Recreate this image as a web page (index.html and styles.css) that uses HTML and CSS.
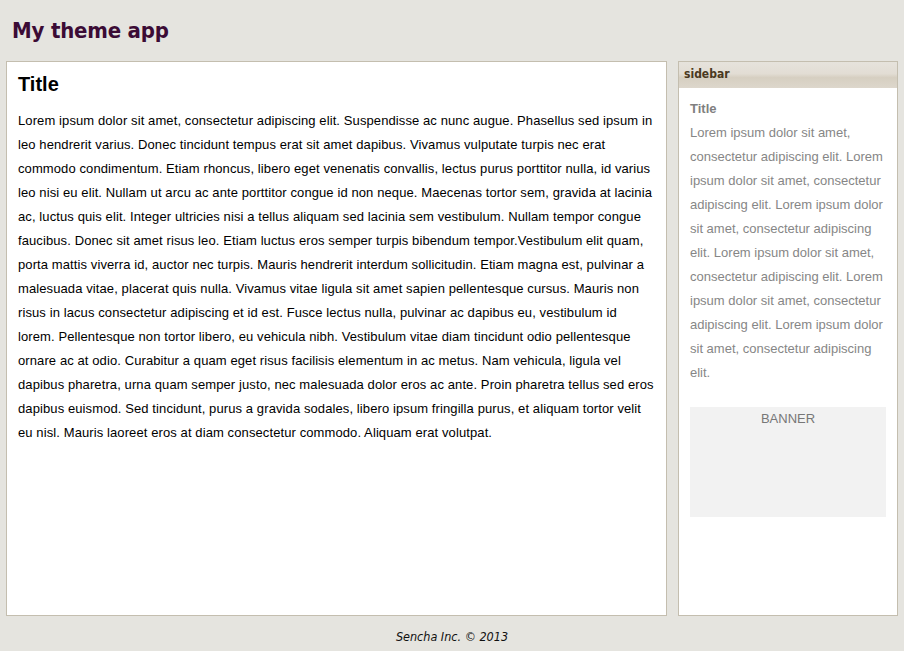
FILE: index.html
```html
<!DOCTYPE html>
<html>
<head>
<meta charset="utf-8">
<title>My theme app</title>
<link rel="stylesheet" href="styles.css">
</head>
<body>
<header class="app-header"><h1 class="app-title">My theme app</h1></header>
<div class="main-row">
  <section class="content-panel">
    <h2 class="content-title">Title</h2>
    <p class="content-text">Lorem ipsum dolor sit amet, consectetur adipiscing elit. Suspendisse ac nunc augue. Phasellus sed ipsum in leo hendrerit varius. Donec tincidunt tempus erat sit amet dapibus. Vivamus vulputate turpis nec erat commodo condimentum. Etiam rhoncus, libero eget venenatis convallis, lectus purus porttitor nulla, id varius leo nisi eu elit. Nullam ut arcu ac ante porttitor congue id non neque. Maecenas tortor sem, gravida at lacinia ac, luctus quis elit. Integer ultricies nisi a tellus aliquam sed lacinia sem vestibulum. Nullam tempor congue faucibus. Donec sit amet risus leo. Etiam luctus eros semper turpis bibendum tempor.Vestibulum elit quam, porta mattis viverra id, auctor nec turpis. Mauris hendrerit interdum sollicitudin. Etiam magna est, pulvinar a malesuada vitae, placerat quis nulla. Vivamus vitae ligula sit amet sapien pellentesque cursus. Mauris non risus in lacus consectetur adipiscing et id est. Fusce lectus nulla, pulvinar ac dapibus eu, vestibulum id lorem. Pellentesque non tortor libero, eu vehicula nibh. Vestibulum vitae diam tincidunt odio pellentesque ornare ac at odio. Curabitur a quam eget risus facilisis elementum in ac metus. Nam vehicula, ligula vel dapibus pharetra, urna quam semper justo, nec malesuada dolor eros ac ante. Proin pharetra tellus sed eros dapibus euismod. Sed tincidunt, purus a gravida sodales, libero ipsum fringilla purus, et aliquam tortor velit eu nisl. Mauris laoreet eros at diam consectetur commodo. Aliquam erat volutpat.</p>
  </section>
  <aside class="sidebar-panel">
    <div class="sidebar-header">sidebar</div>
    <div class="sidebar-body">
      <h3 class="sidebar-title">Title</h3>
      <p class="sidebar-text">Lorem ipsum dolor sit amet, consectetur adipiscing elit. Lorem ipsum dolor sit amet, consectetur adipiscing elit. Lorem ipsum dolor sit amet, consectetur adipiscing elit. Lorem ipsum dolor sit amet, consectetur adipiscing elit. Lorem ipsum dolor sit amet, consectetur adipiscing elit. Lorem ipsum dolor sit amet, consectetur adipiscing elit.</p>
      <div class="banner">BANNER</div>
    </div>
  </aside>
</div>
<footer class="app-footer">Sencha Inc. © 2013</footer>
</body>
</html>
```

FILE: styles.css
```css
html, body {
  margin: 0;
  padding: 0;
  height: 100%;
}
body {
  background: #e5e4df;
  display: flex;
  flex-direction: column;
  height: 651px;
  overflow: hidden;
  font-family: "Liberation Sans", Arial, sans-serif;
}
.app-header {
  height: 61px;
  flex: none;
  padding: 0 12px;
  box-sizing: border-box;
}
.app-title {
  margin: 0;
  padding-top: 16px;
  font-family: "DejaVu Sans Condensed", "DejaVu Sans", sans-serif;
  font-weight: bold;
  font-size: 22px;
  line-height: 30px;
  color: #3b0b35;
  letter-spacing: -0.2px;
}
.main-row {
  display: flex;
  gap: 11px;
  padding: 0 6px;
  height: 555px;
  flex: none;
}
.content-panel {
  width: 661px;
  box-sizing: border-box;
  background: #fff;
  border: 1px solid #c4beaf;
  padding: 8px 11px 0 11px;
}
.content-title {
  margin: 0;
  font-size: 20px;
  font-weight: bold;
  line-height: 28px;
  color: #000;
}
.content-text {
  margin: 11px 0 0 0;
  font-size: 13px;
  line-height: 24px;
  letter-spacing: 0.1px;
  color: #000;
}
.sidebar-panel {
  width: 220px;
  box-sizing: border-box;
  background: #fff;
  border: 1px solid #c4beaf;
  display: flex;
  flex-direction: column;
}
.sidebar-header {
  height: 26px;
  box-sizing: border-box;
  padding: 5px 0 0 5px;
  font-size: 12px;
  font-weight: bold;
  line-height: 14px;
  color: #4a3820;
  font-family: "DejaVu Sans Condensed", "DejaVu Sans", sans-serif;
  background: linear-gradient(to bottom, #e6e3dc 0%, #e2ddd4 45%, #d6cfc1 60%, #ddd7cc 100%);
}
.sidebar-body {
  padding: 13px 11px 0 11px;
}
.sidebar-title {
  margin: 0 0 4px 0;
  font-size: 13px;
  font-weight: bold;
  line-height: 16px;
  color: #808080;
}
.sidebar-text {
  margin: 0;
  font-size: 13px;
  line-height: 24px;
  color: #868686;
}
.banner {
  margin-top: 22px;
  height: 110px;
  box-sizing: border-box;
  padding-top: 1px;
  background: #f2f2f2;
  text-align: center;
  font-size: 13px;
  line-height: 22px;
  color: #777;
}
.app-footer {
  flex: none;
  text-align: center;
  font-family: "DejaVu Sans Condensed", "DejaVu Sans", sans-serif;
  font-style: italic;
  font-size: 12.5px;
  line-height: 35px;
  padding-top: 3px;
  color: #111;
}
```
